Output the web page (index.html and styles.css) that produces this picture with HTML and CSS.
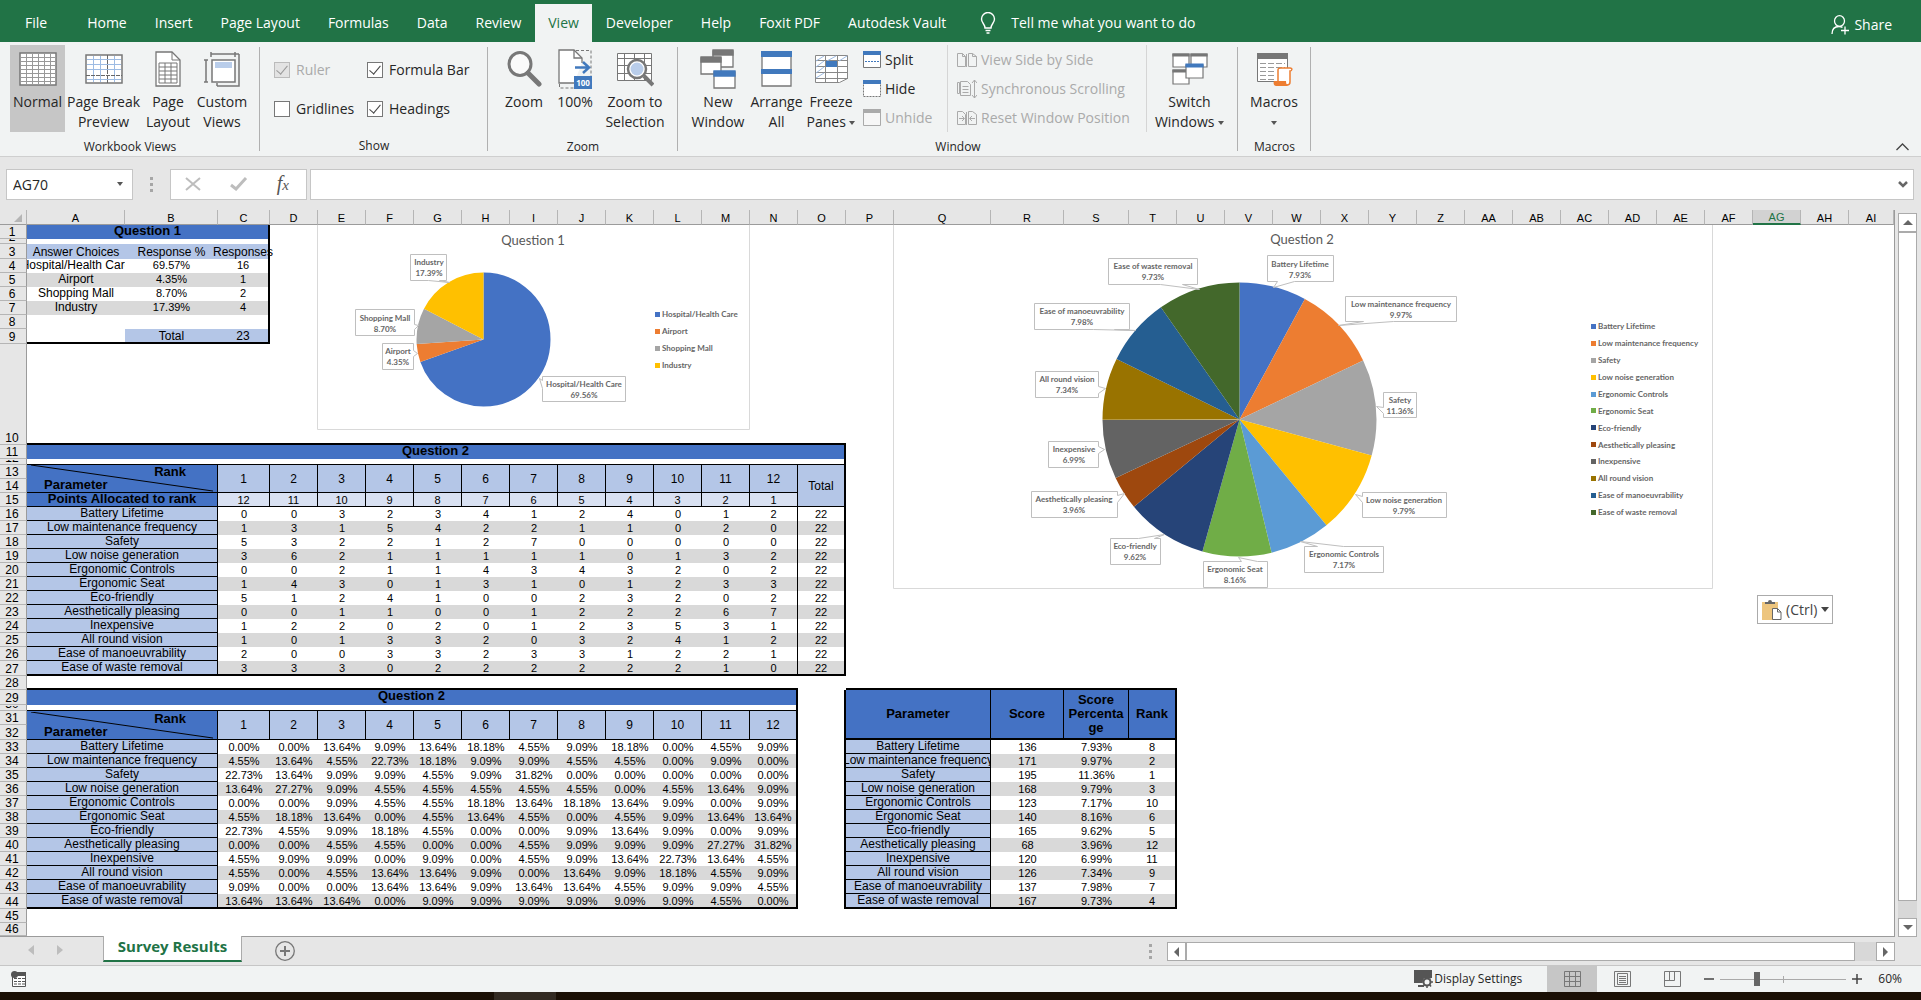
FILE: index.html
```html
<!DOCTYPE html>
<html lang="en">
<head>
<meta charset="utf-8">
<title>Survey Results</title>
<link rel="stylesheet" href="styles.css">
</head>
<body>
<nav class="tabs">
  <a class="tab file" href="#">File</a>
  <a class="tab" href="#">Home</a>
  <a class="tab" href="#">Insert</a>
  <a class="tab" href="#">Page Layout</a>
  <a class="tab" href="#">Formulas</a>
  <a class="tab" href="#">Data</a>
  <a class="tab" href="#">Review</a>
  <a class="tab active" href="#">View</a>
  <a class="tab" href="#">Developer</a>
  <a class="tab" href="#">Help</a>
  <a class="tab" href="#">Foxit PDF</a>
  <a class="tab" href="#">Autodesk Vault</a>
  <button class="tell"><svg width="16" height="22" viewBox="0 0 16 22" fill="none" stroke="#fff" stroke-width="1.4"><path d="M5 16C5 12 1.5 11 1.5 7a6.500 6.500 0 0 1 13 0c0 4-3.500 5-3.500 9zM5.500 18.500h5M6.500 21h3"/></svg><span>Tell me what you want to do</span></button>
  <button class="share"><svg width="19" height="20" viewBox="0 0 19 20" fill="none" stroke="#fff" stroke-width="1.300"><ellipse cx="8.500" cy="6" rx="5" ry="5.300"/><path d="M1 19c0-5 3-7.500 7-7.500 1.500 0 2.500.3 3.500.8M14 11.500v8M10 15.500h8"/></svg><span>Share</span></button>
</nav>

<section class="ribbon">
  <div class="group">
    <div class="body views">
      <button class="big one on w55"><span class="ico"><svg width="38" height="34" viewBox="0 0 38 34"><path fill="#fff" stroke="#777" stroke-width="1.500" d="M1 1h36v32H1z"/><path stroke="#999" d="M7.500 1v32M13.500 1v32M19.500 1v32M25.500 1v32M31.500 1v32M1 5.500h36M1 9.500h36M1 13.500h36M1 17.500h36M1 21.500h36M1 25.500h36M1 29.500h36"/></svg></span>Normal</button>
      <button class="big w77"><span class="ico"><svg width="38" height="30" viewBox="0 0 38 30"><path fill="#fff" stroke="#777" stroke-width="1.500" d="M1 1h36v28H1z"/><path stroke="#9dbbe3" d="M8.500 2v26M15.500 2v26M29.500 2v26M2 5.500h34M2 10.500h34M2 15.500h34M2 25.500h34"/><path stroke="#666" stroke-dasharray="4 1" d="M22.500 1v28M1 21.500h36"/></svg></span>Page Break<br>Preview</button>
      <button class="big w52"><span class="ico"><svg width="26" height="36" viewBox="0 0 26 36" fill="#fff" stroke="#777" stroke-width="1.300"><path d="M1 1h16l8 8v26H1z"/><path d="M17 1v8h8M4 12h18v20H4zM10 12v20M16 12v20M4 16h18M4 20h18M4 24h18M4 28h18" fill="none" stroke-width="1"/></svg></span>Page<br>Layout</button>
      <button class="big w56"><span class="ico"><svg width="38" height="36" viewBox="0 0 38 36" fill="none" stroke="#777" stroke-width="1.500"><path fill="#fff" d="M9 9h23v22H9z"/><path fill="#b9cdea" stroke="none" d="M12 11h17v6H12z"/><path d="M8 3h24M8 1v5M32 1v5M3 9v22M1 9h4M1 31h4M36 3v32H14"/><path d="M32 3h4M14 32v3"/></svg></span>Custom<br>Views</button>
    </div>
    <div class="label">Workbook Views</div>
  </div>
  <div class="group show">
    <div class="body checks">
      <label class="off"><input type="checkbox" checked disabled>Ruler</label>
      <label><input type="checkbox" checked>Formula Bar</label>
      <label><input type="checkbox">Gridlines</label>
      <label><input type="checkbox" checked>Headings</label>
    </div>
    <div class="label">Show</div>
  </div>
  <div class="group">
    <div class="body zoom">
      <button class="big one w44"><span class="ico"><svg width="35" height="36" viewBox="0 0 35 36" fill="none" stroke="#777"><ellipse cx="13" cy="13" rx="11" ry="11.500" fill="#fafafa" stroke-width="3"/><path stroke-width="5" stroke-linecap="round" d="M21 22l11 11"/></svg></span>Zoom</button>
      <button class="big one w58"><span class="ico"><svg width="34" height="40" viewBox="0 0 34 40"><path fill="#fff" stroke="#777" stroke-width="1.300" d="M24 14V9l-8-8H1v33h15"/><path fill="none" stroke="#777" stroke-width="1.300" d="M16 1v8h8"/><path fill="none" stroke="#777" stroke-dasharray="3 2" d="M18 1.500h15V27M1.500 35v4H16"/><path stroke="#4179bd" stroke-width="2.500" fill="none" d="M17 18.500h13M25 13l6 5.500-6 5.500"/><path fill="#4179bd" d="M16 27h18v13H16z"/><text x="25" y="37" class="tiny">100</text></svg></span>100%</button>
      <button class="big w62"><span class="ico"><svg width="38" height="36" viewBox="0 0 38 36" fill="none" stroke="#777"><path fill="#fff" d="M1.500 2.500h34v27h-34z"/><path d="M8.500 2v28M28.500 2v28M18.500 2v28M1 7.500h35M1 14.500h35M1 22.500h35"/><circle cx="21" cy="18" r="9" fill="#fff" stroke-width="2.500"/><circle cx="21" cy="18" r="6.500" fill="#b9cdea" stroke="none"/><path stroke-width="4" d="M28 25l9 9"/></svg></span>Zoom to<br>Selection</button>
    </div>
    <div class="label">Zoom</div>
  </div>
  <div class="group">
    <div class="body window">
      <button class="big w60"><span class="ico"><svg width="36" height="40" viewBox="0 0 36 40" fill="#fff" stroke="#777" stroke-width="1.300"><path d="M13 2h20v16H13z"/><path fill="#777" d="M13 1h20v5H13z"/><path d="M1 9h20v16H1z"/><path fill="#777" d="M1 8h20v5H1z"/><path d="M14 23h21v16H14z"/><path fill="#4179bd" stroke="#4179bd" d="M14 22h21v5H14z"/></svg></span>New<br>Window</button>
      <button class="big w57"><span class="ico"><svg width="31" height="36" viewBox="0 0 31 36"><path fill="#fff" stroke="#777" stroke-width="1.300" d="M1 1h29v34H1z"/><path fill="#4179bd" d="M0 0h31v6H0zM0 18h31v5H0z"/></svg></span>Arrange<br>All</button>
      <button class="big w52"><span class="ico"><svg width="35" height="30" viewBox="0 0 35 30" fill="none" stroke="#888"><path fill="#fff" d="M1.500 1.500h32v23l-8 4h-24z"/><path d="M11.500 1v28M23.500 1v27M1 6.500h33M1 12.500h33M1 18.500h33M1 24.500h33"/><path stroke="#9dbbe3" d="M2 7l8-5M13 7l9-5M25 7l8-5M2 13l8-6M2 19l8-6M2 24l8-5"/><path fill="#4179bd" stroke="none" d="M12 7h11v6H12z"/></svg></span>Freeze<br>Panes <i class="caret"></i></button>
      <div class="stack s1">
        <button class="small"><svg width="18" height="17" viewBox="0 0 18 17"><path fill="#fff" stroke="#777" d="M.5.5h17v16H.5z"/><path fill="#4179bd" d="M0 0h18v4H0z"/><path stroke="#4179bd" stroke-dasharray="2 1" d="M2 10.500h14"/></svg>Split</button>
        <button class="small"><svg width="18" height="17" viewBox="0 0 18 17"><path fill="#fff" stroke="#777" stroke-dasharray="2 1" d="M.5.5h17v16H.5z"/><path fill="#4179bd" d="M0 0h18v4H0z"/></svg>Hide</button>
        <button class="small off" disabled><svg width="18" height="17" viewBox="0 0 18 17"><path fill="#f6f6f6" stroke="#aaa" d="M.5.5h17v16H.5z"/><path fill="#aaa" d="M0 0h18v4H0z"/></svg>Unhide</button>
      </div>
      <div class="stack s2">
        <button class="small off" disabled><svg width="20" height="16" viewBox="0 0 20 16" fill="none" stroke="#aaa"><path d="M.5 1.500h5l3 3v10h-8zM5.500 1.500v3h3M11.500 1.500h4l4 3v10h-8zM15.500 1.500v3h4M9.500 2v13"/></svg>View Side by Side</button>
        <button class="small off" disabled><svg width="20" height="20" viewBox="0 0 20 20" fill="none" stroke="#aaa"><path d="M.5 3.500h2v11h-2zM3.500 2.500h7l3 3v11h-10zM5.500 7.500h6M5.500 10.500h6M5.500 13.500h6M17.500 1v18M15 4l2.500-3L20 4M15 16l2.500 3 2.500-3"/></svg>Synchronous Scrolling</button>
        <button class="small off" disabled><svg width="20" height="16" viewBox="0 0 20 16" fill="none" stroke="#aaa"><path d="M.5 1.500h5l3 3v10h-8zM11.500 1.500h4l4 3v10h-8zM9.500 2v13M2 8.500h5M5 6l2.500 2.500L5 11M18 8.500h-5M15 6l-2.500 2.500L15 11"/></svg>Reset Window Position</button>
      </div>
      <button class="big w85"><span class="ico"><svg width="36" height="32" viewBox="0 0 36 32" fill="#fff" stroke="#777" stroke-width="1.200"><path d="M1 1h16v13H1zM19 1h16v13H19zM1 17h16v14H1z"/><path fill="#777" d="M1 1h16v2H1zM19 1h16v2H19zM1 17h14v2H1z"/><path d="M14 12h17v13H14z"/><path fill="#4179bd" stroke="#4179bd" d="M14 11h17v3H14z"/></svg></span>Switch<br>Windows <i class="caret"></i></button>
    </div>
    <div class="label">Window</div>
  </div>
  <div class="group">
    <div class="body macros">
      <button class="big w60"><span class="ico"><svg width="37" height="34" viewBox="0 0 37 34"><path fill="#fff" stroke="#777" d="M1.500 1.500h30v28h-30z"/><path fill="#777" d="M1 1h31v6H1z"/><path stroke="#999" stroke-dasharray="6 2" d="M4 11.500h25M4 15.500h25M4 19.500h16M4 23.500h16M4 27.500h14"/><path fill="#fff" stroke="#ed7d31" stroke-width="1.500" d="M22 29V18c0-2 1-2 3-2h9c3 0 2 3 0 3v11c0 2-1 3-3 3H20"/><path fill="#ed7d31" d="M18 29h12c0 3 1 4 2 5H20c-2 0-3-3-2-5z"/></svg></span>Macros<br><i class="caret"></i></button>
    </div>
    <div class="label">Macros</div>
  </div>
  <button class="collapse" aria-label="Collapse the ribbon"><svg width="13" height="8" viewBox="0 0 13 8" fill="none" stroke="#444" stroke-width="1.300"><path d="M.5 7l6-6 6 6"/></svg></button>
</section>

<section class="formula">
  <div class="namebox"><input aria-label="Name box" value="AG70"><i class="caret"></i></div>
  <svg class="dots" width="4" height="16" fill="#a6a6a6"><path d="M0 1h3v3H0zM0 7h3v3H0zM0 13h3v3H0z"/></svg>
  <div class="fxbox">
    <button aria-label="Cancel"><svg width="16" height="14" viewBox="0 0 16 14" fill="none" stroke="#bdbdbd" stroke-width="2"><path d="M1 1l14 12M15 1L1 13"/></svg></button>
    <button aria-label="Enter"><svg width="18" height="14" viewBox="0 0 18 14" fill="none" stroke="#bdbdbd" stroke-width="3"><path d="M1 8l5 4L16 1"/></svg></button>
    <button class="fx" aria-label="Insert function"><i>f</i><i class="x">x</i></button>
  </div>
  <div class="entry"><input aria-label="Formula"><svg width="10" height="7" viewBox="0 0 10 7" fill="none" stroke="#666" stroke-width="2.500"><path d="M1 1l4 4 4-4"/></svg></div>
</section>

<main class="work">
<div class="pane">
<table class="sheet">
<colgroup><col class="c27"><col class="c98"><col class="c93"><col class="c52"><col span="13" class="c48"><col class="c97"><col class="c73"><col class="c65"><col span="15" class="c48"><col></colgroup>
<thead><tr><th class="corner"><svg width="8" height="8"><path fill="#b5b5b5" d="M8 0v8H0z"/></svg><th>A<th>B<th>C<th>D<th>E<th>F<th>G<th>H<th>I<th>J<th>K<th>L<th>M<th>N<th>O<th>P<th>Q<th>R<th>S<th>T<th>U<th>V<th>W<th>X<th>Y<th>Z<th>AA<th>AB<th>AC<th>AD<th>AE<th>AF<th class="sel">AG<th>AH<th>AI</tr></thead>
<tbody>
<tr><th>1<th colspan="3" class="title r2">Question 1<td colspan="32">
<tr class="h5"><th><span class="cut">2</span><td colspan="3" class="r2"><td colspan="32">
<tr class="h15 sub"><th>3<th>Answer Choices<th>Response %<th class="r2"><span class="spill">Responses</span><td colspan="32">
<tr class="ans"><th>4<td><span class="clip">Hospital/Health Care</span><td>69.57%<td class="r2">16<td colspan="32">
<tr class="ans z"><th>5<td>Airport<td>4.35%<td class="r2">1<td colspan="32">
<tr class="ans"><th>6<td>Shopping Mall<td>8.70%<td class="r2">2<td colspan="32">
<tr class="ans z"><th>7<td>Industry<td>17.39%<td class="r2">4<td colspan="32">
<tr><th>8<td colspan="3" class="r2"><td colspan="32">
<tr class="h15"><th>9<td class="b2"><td class="light b2">Total<td class="light b2 r2">23<td colspan="32">
<tr class="h101"><th>10<td colspan="15" class="b2"><td colspan="20">
<tr><th>11<th colspan="15" class="title r2">Question 2<td colspan="20">
<tr class="h6"><th><span class="cut">12</span><td colspan="15" class="b1 r2"><td colspan="20">
<tr class="rank"><th>13<th colspan="2" rowspan="2" class="diag"><div class="split"><span>Rank</span><span>Parameter</span><svg viewBox="0 0 191 28" preserveAspectRatio="none"><path d="M4 0L187 27" stroke="#000"/></svg></div><th rowspan="2">1<th rowspan="2">2<th rowspan="2">3<th rowspan="2">4<th rowspan="2">5<th rowspan="2">6<th rowspan="2">7<th rowspan="2">8<th rowspan="2">9<th rowspan="2">10<th rowspan="2">11<th rowspan="2">12<th rowspan="3" class="r2">Total<td colspan="20">
<tr><th>14<td colspan="20">
<tr class="points"><th>15<th colspan="2">Points Allocated to rank<td>12<td>11<td>10<td>9<td>8<td>7<td>6<td>5<td>4<td>3<td>2<td>1<td colspan="20">
<tr class="pts"><th>16<th colspan="2">Battery Lifetime<td>0<td>0<td>3<td>2<td>3<td>4<td>1<td>2<td>4<td>0<td>1<td>2<td>22<td colspan="20">
<tr class="pts z"><th>17<th colspan="2">Low maintenance frequency<td>1<td>3<td>1<td>5<td>4<td>2<td>2<td>1<td>1<td>0<td>2<td>0<td>22<td colspan="20">
<tr class="pts"><th>18<th colspan="2">Safety<td>5<td>3<td>2<td>2<td>1<td>2<td>7<td>0<td>0<td>0<td>0<td>0<td>22<td colspan="20">
<tr class="pts z"><th>19<th colspan="2">Low noise generation<td>3<td>6<td>2<td>1<td>1<td>1<td>1<td>1<td>0<td>1<td>3<td>2<td>22<td colspan="20">
<tr class="pts"><th>20<th colspan="2">Ergonomic Controls<td>0<td>0<td>2<td>1<td>1<td>4<td>3<td>4<td>3<td>2<td>0<td>2<td>22<td colspan="20">
<tr class="pts z"><th>21<th colspan="2">Ergonomic Seat<td>1<td>4<td>3<td>0<td>1<td>3<td>1<td>0<td>1<td>2<td>3<td>3<td>22<td colspan="20">
<tr class="pts"><th>22<th colspan="2">Eco-friendly<td>5<td>1<td>2<td>4<td>1<td>0<td>0<td>2<td>3<td>2<td>0<td>2<td>22<td colspan="20">
<tr class="pts z"><th>23<th colspan="2">Aesthetically pleasing<td>0<td>0<td>1<td>1<td>0<td>0<td>1<td>2<td>2<td>2<td>6<td>7<td>22<td colspan="20">
<tr class="pts"><th>24<th colspan="2">Inexpensive<td>1<td>2<td>2<td>0<td>2<td>0<td>1<td>2<td>3<td>5<td>3<td>1<td>22<td colspan="20">
<tr class="pts z"><th>25<th colspan="2">All round vision<td>1<td>0<td>1<td>3<td>3<td>2<td>0<td>3<td>2<td>4<td>1<td>2<td>22<td colspan="20">
<tr class="pts"><th>26<th colspan="2">Ease of manoeuvrability<td>2<td>0<td>0<td>3<td>3<td>2<td>3<td>3<td>1<td>2<td>2<td>1<td>22<td colspan="20">
<tr class="pts z last"><th>27<th colspan="2">Ease of waste removal<td>3<td>3<td>3<td>0<td>2<td>2<td>2<td>2<td>2<td>2<td>1<td>0<td>22<td colspan="20">
<tr><th>28<td colspan="14" class="b2"><td><td colspan="5" class="b2"><td colspan="15">
<tr class="h15 score"><th>29<th colspan="14" class="title r2">Question 2<td rowspan="4" class="r2"><th colspan="2" rowspan="4">Parameter<th rowspan="4">Score<th rowspan="4">Score<br>Percenta<br>ge<th rowspan="4" class="r2">Rank<td colspan="15">
<tr class="h6"><th><span class="cut">30</span><td colspan="14" class="b1 r2"><td colspan="15">
<tr class="rank"><th>31<th colspan="2" rowspan="2" class="diag"><div class="split"><span>Rank</span><span>Parameter</span><svg viewBox="0 0 191 28" preserveAspectRatio="none"><path d="M4 0L187 27" stroke="#000"/></svg></div><th rowspan="2">1<th rowspan="2">2<th rowspan="2">3<th rowspan="2">4<th rowspan="2">5<th rowspan="2">6<th rowspan="2">7<th rowspan="2">8<th rowspan="2">9<th rowspan="2">10<th rowspan="2">11<th rowspan="2" class="r2">12<td colspan="15">
<tr class="h15"><th>32<td colspan="15">
<tr class="pct"><th>33<th colspan="2">Battery Lifetime<td>0.00%<td>0.00%<td>13.64%<td>9.09%<td>13.64%<td>18.18%<td>4.55%<td>9.09%<td>18.18%<td>0.00%<td>4.55%<td>9.09%<td><th colspan="2">Battery Lifetime<td>136<td>7.93%<td>8<td colspan="15">
<tr class="pct z"><th>34<th colspan="2">Low maintenance frequency<td>4.55%<td>13.64%<td>4.55%<td>22.73%<td>18.18%<td>9.09%<td>9.09%<td>4.55%<td>4.55%<td>0.00%<td>9.09%<td>0.00%<td><th colspan="2"><span class="clip">Low maintenance frequency</span><td>171<td>9.97%<td>2<td colspan="15">
<tr class="pct"><th>35<th colspan="2">Safety<td>22.73%<td>13.64%<td>9.09%<td>9.09%<td>4.55%<td>9.09%<td>31.82%<td>0.00%<td>0.00%<td>0.00%<td>0.00%<td>0.00%<td><th colspan="2">Safety<td>195<td>11.36%<td>1<td colspan="15">
<tr class="pct z"><th>36<th colspan="2">Low noise generation<td>13.64%<td>27.27%<td>9.09%<td>4.55%<td>4.55%<td>4.55%<td>4.55%<td>4.55%<td>0.00%<td>4.55%<td>13.64%<td>9.09%<td><th colspan="2">Low noise generation<td>168<td>9.79%<td>3<td colspan="15">
<tr class="pct"><th>37<th colspan="2">Ergonomic Controls<td>0.00%<td>0.00%<td>9.09%<td>4.55%<td>4.55%<td>18.18%<td>13.64%<td>18.18%<td>13.64%<td>9.09%<td>0.00%<td>9.09%<td><th colspan="2">Ergonomic Controls<td>123<td>7.17%<td>10<td colspan="15">
<tr class="pct z"><th>38<th colspan="2">Ergonomic Seat<td>4.55%<td>18.18%<td>13.64%<td>0.00%<td>4.55%<td>13.64%<td>4.55%<td>0.00%<td>4.55%<td>9.09%<td>13.64%<td>13.64%<td><th colspan="2">Ergonomic Seat<td>140<td>8.16%<td>6<td colspan="15">
<tr class="pct"><th>39<th colspan="2">Eco-friendly<td>22.73%<td>4.55%<td>9.09%<td>18.18%<td>4.55%<td>0.00%<td>0.00%<td>9.09%<td>13.64%<td>9.09%<td>0.00%<td>9.09%<td><th colspan="2">Eco-friendly<td>165<td>9.62%<td>5<td colspan="15">
<tr class="pct z"><th>40<th colspan="2">Aesthetically pleasing<td>0.00%<td>0.00%<td>4.55%<td>4.55%<td>0.00%<td>0.00%<td>4.55%<td>9.09%<td>9.09%<td>9.09%<td>27.27%<td>31.82%<td><th colspan="2">Aesthetically pleasing<td>68<td>3.96%<td>12<td colspan="15">
<tr class="pct"><th>41<th colspan="2">Inexpensive<td>4.55%<td>9.09%<td>9.09%<td>0.00%<td>9.09%<td>0.00%<td>4.55%<td>9.09%<td>13.64%<td>22.73%<td>13.64%<td>4.55%<td><th colspan="2">Inexpensive<td>120<td>6.99%<td>11<td colspan="15">
<tr class="pct z"><th>42<th colspan="2">All round vision<td>4.55%<td>0.00%<td>4.55%<td>13.64%<td>13.64%<td>9.09%<td>0.00%<td>13.64%<td>9.09%<td>18.18%<td>4.55%<td>9.09%<td><th colspan="2">All round vision<td>126<td>7.34%<td>9<td colspan="15">
<tr class="pct"><th>43<th colspan="2">Ease of manoeuvrability<td>9.09%<td>0.00%<td>0.00%<td>13.64%<td>13.64%<td>9.09%<td>13.64%<td>13.64%<td>4.55%<td>9.09%<td>9.09%<td>4.55%<td><th colspan="2">Ease of manoeuvrability<td>137<td>7.98%<td>7<td colspan="15">
<tr class="pct z last"><th>44<th colspan="2">Ease of waste removal<td>13.64%<td>13.64%<td>13.64%<td>0.00%<td>9.09%<td>9.09%<td>9.09%<td>9.09%<td>9.09%<td>9.09%<td>4.55%<td>0.00%<td><th colspan="2">Ease of waste removal<td>167<td>9.73%<td>4<td colspan="15">
<tr><th>45<td colspan="35">
<tr class="h12"><th>46<td colspan="35">
</tbody>
</table>

<svg class="chart chart1" width="433" height="205" viewBox="0 0 433 205" role="img" aria-label="Question 1 pie chart">
  <path class="frame" d="M.5 0v204.500h432V0"/>
  <text class="ctitle" x="216" y="20">Question 1</text>
  <g class="pie" transform="translate(166.500 114.500) rotate(-90)" stroke-width="67">
    <circle r="33.500" pathLength="100" stroke="#4472c4" stroke-dasharray="69.560 100"/>
    <circle r="33.500" pathLength="100" stroke="#ed7d31" stroke-dasharray="4.350 100" stroke-dashoffset="-69.560"/>
    <circle r="33.500" pathLength="100" stroke="#a5a5a5" stroke-dasharray="8.700 100" stroke-dashoffset="-73.910"/>
    <circle r="33.500" pathLength="100" stroke="#ffc000" stroke-dasharray="17.390 100" stroke-dashoffset="-82.610"/>
  </g>
  <g class="call">
    <path d="M93.500 29.500h36v26h-7l10 2-21-2h-18z"/><text x="112" y="40">Industry</text><text x="112" y="51">17.39%</text>
    <path d="M38.500 84.500h59v15l4 1-4 4v6h-59z"/><text x="68" y="96">Shopping Mall</text><text x="68" y="107">8.70%</text>
    <path d="M65.500 118.500h31v7l4 3-4 3v13h-31z"/><text x="81" y="129">Airport</text><text x="81" y="140">4.35%</text>
    <path d="M225.500 151.500h83v25h-83v-13l-3-10 3 2z"/><text x="267" y="162">Hospital/Health Care</text><text x="267" y="173">69.56%</text>
  </g>
  <g class="legend">
    <path fill="#4472c4" d="M338 87h5v5h-5z"/><text x="345" y="92">Hospital/Health Care</text>
    <path fill="#ed7d31" d="M338 104h5v5h-5z"/><text x="345" y="109">Airport</text>
    <path fill="#a5a5a5" d="M338 121h5v5h-5z"/><text x="345" y="126">Shopping Mall</text>
    <path fill="#ffc000" d="M338 138h5v5h-5z"/><text x="345" y="143">Industry</text>
  </g>
</svg>

<svg class="chart chart2" width="820" height="364" viewBox="0 0 820 364" role="img" aria-label="Question 2 pie chart">
  <path class="frame" d="M.5 0v363.500h819V0"/>
  <text class="ctitle" x="409" y="19">Question 2</text>
  <g class="pie" transform="translate(346.500 194.500) rotate(-90)" stroke-width="137">
    <circle r="68.500" pathLength="100" stroke="#4472c4" stroke-dasharray="7.930 100"/>
    <circle r="68.500" pathLength="100" stroke="#ed7d31" stroke-dasharray="9.970 100" stroke-dashoffset="-7.930"/>
    <circle r="68.500" pathLength="100" stroke="#a5a5a5" stroke-dasharray="11.360 100" stroke-dashoffset="-17.900"/>
    <circle r="68.500" pathLength="100" stroke="#ffc000" stroke-dasharray="9.790 100" stroke-dashoffset="-29.260"/>
    <circle r="68.500" pathLength="100" stroke="#5b9bd5" stroke-dasharray="7.170 100" stroke-dashoffset="-39.050"/>
    <circle r="68.500" pathLength="100" stroke="#70ad47" stroke-dasharray="8.160 100" stroke-dashoffset="-46.220"/>
    <circle r="68.500" pathLength="100" stroke="#264478" stroke-dasharray="9.620 100" stroke-dashoffset="-54.380"/>
    <circle r="68.500" pathLength="100" stroke="#9e480e" stroke-dasharray="3.960 100" stroke-dashoffset="-64"/>
    <circle r="68.500" pathLength="100" stroke="#636363" stroke-dasharray="6.990 100" stroke-dashoffset="-67.960"/>
    <circle r="68.500" pathLength="100" stroke="#997300" stroke-dasharray="7.340 100" stroke-dashoffset="-74.950"/>
    <circle r="68.500" pathLength="100" stroke="#255e91" stroke-dasharray="7.980 100" stroke-dashoffset="-82.290"/>
    <circle r="68.500" pathLength="100" stroke="#43682b" stroke-dasharray="9.730 100" stroke-dashoffset="-90.270"/>
  </g>
  <g class="call">
    <path d="M215.500 33.500h89v26h-15l17 5-39-5h-52z"/><text x="260" y="44">Ease of waste removal</text><text x="260" y="55">9.73%</text>
    <path d="M374.500 30.500h66v26h-39l-21 6 4-6h-10z"/><text x="407" y="42">Battery Lifetime</text><text x="407" y="53">7.93%</text>
    <path d="M452.500 71.500h111v25h-63l-55 4 25-4h-18z"/><text x="508" y="82">Low maintenance frequency</text><text x="508" y="93">9.97%</text>
    <path d="M490.500 167.500h33v25h-33v-4l-7-7 7 1z"/><text x="507" y="178">Safety</text><text x="507" y="189">11.36%</text>
    <path d="M469.500 267.500h84v25h-84v-15l-7-8 7 2z"/><text x="511" y="278">Low noise generation</text><text x="511" y="289">9.79%</text>
    <path d="M411.500 321.500h13l-17-5 43 5h40v26h-79z"/><text x="451" y="332">Ergonomic Controls</text><text x="451" y="343">7.17%</text>
    <path d="M310.500 336.500h38l-3-4 19 4h10v26h-64z"/><text x="342" y="347">Ergonomic Seat</text><text x="342" y="358">8.16%</text>
    <path d="M217.500 313.500h28l26-4-10 4h6v26h-50z"/><text x="242" y="324">Eco-friendly</text><text x="242" y="335">9.62%</text>
    <path d="M138.500 266.500h86v4l7-2-7 9v15h-86z"/><text x="181" y="277">Aesthetically pleasing</text><text x="181" y="288">3.96%</text>
    <path d="M155.500 216.500h50v5l6 3-6 4v14h-50z"/><text x="181" y="227">Inexpensive</text><text x="181" y="238">6.99%</text>
    <path d="M142.500 146.500h63v15l7 2-7 5v4h-63z"/><text x="174" y="157">All round vision</text><text x="174" y="168">7.34%</text>
    <path d="M141.500 78.500h95v26h-15l21 1-42-1h-59z"/><text x="189" y="89">Ease of manoeuvrability</text><text x="189" y="100">7.98%</text>
  </g>
  <g class="legend">
    <path fill="#4472c4" d="M698 99h5v5h-5z"/><text x="705" y="104">Battery Lifetime</text>
    <path fill="#ed7d31" d="M698 116h5v5h-5z"/><text x="705" y="121">Low maintenance frequency</text>
    <path fill="#a5a5a5" d="M698 133h5v5h-5z"/><text x="705" y="138">Safety</text>
    <path fill="#ffc000" d="M698 150h5v5h-5z"/><text x="705" y="155">Low noise generation</text>
    <path fill="#5b9bd5" d="M698 167h5v5h-5z"/><text x="705" y="172">Ergonomic Controls</text>
    <path fill="#70ad47" d="M698 183h5v5h-5z"/><text x="705" y="189">Ergonomic Seat</text>
    <path fill="#264478" d="M698 200h5v5h-5z"/><text x="705" y="206">Eco-friendly</text>
    <path fill="#9e480e" d="M698 217h5v5h-5z"/><text x="705" y="223">Aesthetically pleasing</text>
    <path fill="#636363" d="M698 234h5v5h-5z"/><text x="705" y="239">Inexpensive</text>
    <path fill="#997300" d="M698 251h5v5h-5z"/><text x="705" y="256">All round vision</text>
    <path fill="#255e91" d="M698 268h5v5h-5z"/><text x="705" y="273">Ease of manoeuvrability</text>
    <path fill="#43682b" d="M698 285h5v5h-5z"/><text x="705" y="290">Ease of waste removal</text>
  </g>
</svg>

<button class="paste"><svg width="20" height="20" viewBox="0 0 20 20"><path fill="#edc57e" d="M0 2h16v18H0z"/><path fill="#666" d="M3 4V2h3a2 2 0 0 1 4 0h3v2z"/><path fill="#fff" stroke="#666" d="M10.500 8.500h5l3.500 3.500v7.500h-8.500z"/><path fill="none" stroke="#666" d="M15.500 8.500V12H19"/></svg>(Ctrl)<svg width="8" height="5"><path fill="#444" d="M0 0h8L4 5z"/></svg></button>
</div>

<div class="vscroll">
  <button aria-label="Scroll up"><svg width="10" height="5"><path fill="#666" d="M0 5l5-5 5 5z"/></svg></button>
  <div class="vthumb"></div>
  <div class="vtrack"></div>
  <button aria-label="Scroll down"><svg width="10" height="5"><path fill="#666" d="M0 0h10L5 5z"/></svg></button>
</div>
</main>

<section class="sheetbar">
  <div class="nav"><button aria-label="Previous sheet"><svg width="6" height="10"><path fill="#bdbdbd" d="M6 0v10L0 5z"/></svg></button><button aria-label="Next sheet"><svg width="6" height="10"><path fill="#bdbdbd" d="M0 0v10l6-5z"/></svg></button></div>
  <button class="stab">Survey Results</button>
  <button class="add" aria-label="New sheet"><svg width="20" height="20" viewBox="0 0 20 20" fill="none" stroke="#777"><circle cx="10" cy="10" r="9.300" stroke-width="1.300"/><path stroke-width="2" d="M10 5v10M5 10h10"/></svg></button>
  <svg class="dots push" width="4" height="16" fill="#a6a6a6"><path d="M0 1h3v3H0zM0 7h3v3H0zM0 13h3v3H0z"/></svg>
  <div class="hscroll">
    <button aria-label="Scroll left"><svg width="5" height="10"><path fill="#666" d="M5 0v10L0 5z"/></svg></button>
    <div class="hthumb"></div>
    <div class="htrack"></div>
    <button aria-label="Scroll right"><svg width="5" height="10"><path fill="#666" d="M0 0v10l5-5z"/></svg></button>
  </div>
</section>

<footer class="status">
  <svg class="rec" width="16" height="16" viewBox="0 0 16 16"><path fill="#fff" stroke="#555" d="M1.500 3.500h13v12h-13z"/><path fill="#555" d="M6 1h9v4H6z"/><path stroke="#555" stroke-dasharray="3 1" d="M3 7.500h11M3 10.500h11M3 13h11"/><circle cx="3.500" cy="3.500" r="3.500" fill="#555"/></svg>
  <button class="disp"><svg width="20" height="18" viewBox="0 0 20 18"><path fill="#555" d="M1 0h18v8h-8l-2 5H1zM5 15h6v2H5z"/><circle cx="14" cy="12" r="3.500" fill="none" stroke="#555" stroke-width="2"/><path stroke="#555" stroke-width="1.500" d="M14 7v2M14 15v3M9 12h2M17 12h3M10.500 8.500l1 1M16.500 14.500l1.500 2M17.500 8.500l-1 1M11.500 14.500l-1.500 2"/></svg>Display Settings</button>
  <button class="vw cur" aria-label="Normal view"><svg width="17" height="16" fill="none" stroke="#777"><path d="M.5.5h16v15H.5zM5.500 0v16M11.500 0v16M0 5.500h17M0 10.500h17"/></svg></button>
  <button class="vw" aria-label="Page layout view"><svg width="17" height="16" fill="none" stroke="#777"><path d="M.5.5h16v15H.5zM3.500 2.500h10v11h-10zM5 5.500h7M5 7.500h7M5 9.500h7M5 11.500h7"/></svg></button>
  <button class="vw" aria-label="Page break view"><svg width="17" height="16" fill="none" stroke="#777"><path d="M.5.5h16v15H.5zM.5 9.500h10V.5M5.500 0v9"/></svg></button>
  <div class="zoombar"><button aria-label="Zoom out"><svg width="10" height="10"><path stroke="#444" stroke-width="1.500" d="M0 5h10"/></svg></button><input type="range" min="0" max="100" value="28" aria-label="Zoom"><button aria-label="Zoom in"><svg width="10" height="10"><path stroke="#444" stroke-width="1.500" d="M0 5h10M5 0v10"/></svg></button></div>
  <span class="pctg">60%</span>
</footer>
<div class="taskbar"><span></span></div>
</body>
</html>
```
FILE: styles.css
```css
* { box-sizing: border-box; }
body {
  margin: 0;
  min-height: 100vh;
  display: flex;
  flex-direction: column;
  overflow: hidden;
  background: #e6e6e6;
  color: #262626;
  font: 14px/20px "Open Sans", "Noto Sans", sans-serif;
}
button, input { font: inherit; color: inherit; }
button { margin: 0; padding: 0; border: 0; background: none; }
svg { display: block; flex: none; }

/* tab strip */
.tabs { display: flex; align-items: stretch; height: 42px; padding-top: 4px; background: #217346; color: #fff; }
.tab { padding: 9px 14px 0; color: #fff; text-decoration: none; white-space: nowrap; }
.tab.file { padding: 9px 26px 0 25px; }
.tab.active { padding: 9px 13px 0; background: #f1f3f3; color: #217346; }
.tell { display: flex; align-items: center; gap: 15px; margin-left: 20px; white-space: nowrap; }
.share { display: flex; align-items: center; gap: 4px; margin: 0 29px 0 auto; padding-top: 4px; }

/* ribbon */
.ribbon { display: flex; height: 115px; padding: 3px 0 0; background: #f1f3f3; border-bottom: 1px solid #cfcfcf; }
.group { position: relative; display: flex; flex-direction: column; }
.group::after { content: ""; position: absolute; right: 0; top: 2px; bottom: 5px; width: 1px; background: #b0b0b0; }
.body { display: flex; height: 87px; }
.views { padding: 0 10px; }
.zoom { padding: 0 12px 0 14px; }
.window { padding: 0 6px 0 10px; }
.macros { padding: 0 7px 0 6px; }
.label { padding-top: 5px; text-align: center; font-size: 12px; }
.big { height: 87px; text-align: center; white-space: nowrap; }
.one { padding-bottom: 20px; }
.ico { display: flex; align-items: center; justify-content: center; height: 47px; }
.on { background: #c6c6c6; }
.w44 { width: 44px; } .w52 { width: 52px; } .w55 { width: 55px; } .w56 { width: 56px; }
.w57 { width: 57px; } .w58 { width: 58px; } .w60 { width: 60px; } .w62 { width: 62px; }
.w77 { width: 77px; } .w85 { width: 85px; }
.tiny { font: bold 8px "Open Sans", sans-serif; fill: #fff; text-anchor: middle; }
.caret { display: inline-block; border: 3px solid transparent; border-top: 4px solid #555; border-bottom: 0; vertical-align: 2px; }
.show { width: 228px; }
.checks { display: grid; grid-template-columns: 93px 1fr; grid-auto-rows: 39px; padding: 5px 0 0 14px; }
.checks label { display: flex; align-items: center; gap: 6px; white-space: nowrap; }
.checks input { appearance: none; flex: none; width: 16px; height: 16px; margin: 0; background: #fff; border: 1px solid #777; }
.checks input:checked::after { content: ""; display: block; width: 5px; height: 10px; margin: 0 0 0 4px; border: solid #444; border-width: 0 1px 1px 0; transform: rotate(40deg); }
.checks .off input { background: #e3e3e3; border-color: #bbb; }
.checks .off input::after { border-color: #999; }
.off, .off:disabled { color: #aaa; }
.stack { display: flex; flex-direction: column; }
.s1 { width: 90px; padding-left: 6px; }
.s2 { width: 200px; padding-left: 9px; border: solid #d5d5d5; border-width: 0 1px; }
.small { display: flex; align-items: center; gap: 4px; height: 29px; white-space: nowrap; }
.collapse { margin: auto 12px 5px auto; }

/* formula bar */
.formula { display: flex; align-items: center; height: 53px; padding: 1px 7px 0 6px; }
.namebox, .fxbox, .entry { display: flex; align-items: center; height: 31px; background: #fff; border: 1px solid #c6c6c6; }
.namebox { width: 127px; padding: 0 9px 0 6px; }
.namebox input, .entry input { flex: 1; min-width: 0; height: 28px; padding: 0; border: 0; outline: 0; background: none; }
.dots { margin: 0 16px 0 17px; }
.fxbox { width: 137px; justify-content: space-between; padding: 0 17px 0 14px; }
.fx { font: italic 20px/24px "Liberation Serif", serif; color: #555; }
.fx .x { font-size: 15px; }
.entry { flex: 1; margin-left: 3px; padding: 0 5px; }

/* worksheet */
.work { display: flex; }
.pane { position: relative; flex: 1; min-width: 0; overflow: hidden; background: #fff; border: solid #9b9b9b; border-width: 0 1px 1px 0; }
.sheet { width: 100%; table-layout: fixed; border-collapse: separate; border-spacing: 0; color: #000; font: 11px/12px "Liberation Sans", Arial, sans-serif; }
.c27 { width: 27px; } .c98 { width: 98px; } .c93 { width: 93px; } .c52 { width: 52px; } .c48 { width: 48px; }
.c97 { width: 97px; } .c73 { width: 73px; } .c65 { width: 65px; }
.sheet td, .sheet th { padding: 0; text-align: center; vertical-align: middle; white-space: nowrap; font-weight: normal; border: 0 solid #000; }
.sheet tr { height: 14px; }
.sheet .h5 { height: 5px; } .sheet .h6 { height: 6px; } .sheet .h12 { height: 12px; }
.sheet .h15, .sheet .last { height: 15px; } .sheet .h101 { height: 101px; }
.sheet thead tr { height: 15px; }
.sheet thead th { background: #e6e6e6; border-right: 1px solid #b5b5b5; border-bottom: 1px solid #9b9b9b; font-size: 11px; vertical-align: bottom; }
.sheet thead .sel { background: #d2d2d2; color: #217346; border-bottom: 2px solid #217346; }
.sheet .corner svg { margin: 0 0 2px 14px; }
.sheet .title, .sheet .points th + th { background: #4472c4; font-weight: bold; font-size: 13px; vertical-align: top; }
.sheet .score > td ~ th { background: #4472c4; font-weight: bold; font-size: 13px; line-height: 14px; border-right: 1px solid; border-bottom: 2px solid; }
.sheet .sub th + th, .sheet .light, .sheet .rank th + th, .sheet .pts th + th, .sheet .pct th + th, .sheet .pct td + th { background: #b4c6e7; font-size: 12px; }
.sheet .ans td:nth-child(2) { font-size: 12px; }
.sheet .pts th + th, .sheet .pct th + th, .sheet .pct td + th, .sheet .ans td { vertical-align: top; }
.sheet .rank th + th { border-right: 1px solid; border-bottom: 1px solid; }
.sheet .rank .diag { background: #4472c4; }
.sheet .points td { background: #d9e1f2; border-right: 1px solid; border-bottom: 1px solid; }
.sheet .points td:last-child { background: none; border: 0; }
.sheet .points th + th { border-right: 1px solid; border-bottom: 1px solid; }
.sheet .pts th + th, .sheet .pct th + th, .sheet .pct td + th { border-right: 1px solid; border-bottom: 1px solid; }
.sheet .z td { background: #d9d9d9; }
.sheet .z td:last-child, .sheet .pct.z td:nth-child(15) { background: none; }
.sheet .pts td:nth-child(14) { border-right: 1px solid; }
.sheet .pts td:nth-child(15), .sheet .pct td:nth-child(14), .sheet .pct td:nth-child(15), .sheet .pct td:nth-child(19) { border-right: 2px solid; }
.sheet .last th + th, .sheet .last td + th, .sheet .last td { border-bottom: 2px solid; }
.sheet .last td:last-child, .sheet .pct.last td:nth-child(15) { border-bottom: 0; }
.sheet .sub .r2, .sheet .r2, .sheet .rank .r2, .sheet .score > .r2 { border-right: 2px solid #000; }
.sheet .b1 { border-bottom: 1px solid #000; }
.sheet .b2 { border-bottom: 2px solid #000; }
.sheet tbody th:first-child { padding-right: 2px; background: #e6e6e6; border-right: 1px solid #9b9b9b; border-bottom: 1px solid #b5b5b5; font-size: 12px; vertical-align: bottom; }
.clip, .spill { display: flex; justify-content: center; overflow: hidden; }
.spill { overflow: visible; }
.cut { display: flex; align-items: flex-end; justify-content: center; height: 4px; overflow: hidden; }
.split { position: relative; display: flex; flex-direction: column; height: 27px; font-size: 13px; line-height: 13px; font-weight: bold; }
.split span:first-child { align-self: flex-end; margin-right: 31px; }
.split span:nth-child(2) { align-self: flex-start; margin-left: 17px; }
.split svg { position: absolute; left: 0; top: 0; width: 100%; height: 100%; }

/* floating objects on the sheet */
.chart { position: absolute; top: 15px; background: #fff; font-family: Lato, "Open Sans", sans-serif; }
.chart1 { left: 317px; }
.chart2 { left: 893px; }
.frame { fill: none; stroke: #d9d9d9; }
.ctitle { font-size: 13px; text-anchor: middle; fill: #595959; }
.pie circle { fill: none; }
.call path { fill: #fff; stroke: #bfbfbf; }
.call text, .legend text { font-size: 8px; font-weight: bold; fill: #666; }
.call text { text-anchor: middle; }
.paste { position: absolute; left: 1757px; top: 385px; display: flex; align-items: center; gap: 4px; width: 76px; height: 29px; padding-left: 4px; background: #fff; border: 1px solid #ababab; color: #444; }

/* scroll bars */
.vscroll { display: flex; flex-direction: column; width: 26px; padding: 3px 4px 0 3px; }
.vscroll button { display: flex; align-items: center; justify-content: center; height: 19px; background: #fff; border: 1px solid #ababab; }
.vthumb { flex: 1; background: #fff; border: 1px solid #ababab; }
.vtrack { height: 17px; background: #d8d8d8; }

/* sheet tabs */
.sheetbar { display: flex; align-items: flex-start; height: 29px; padding-right: 26px; border-bottom: 1px solid #c6c6c6; }
.nav { display: flex; gap: 23px; width: 103px; padding: 8px 0 0 28px; }
.stab { position: relative; width: 139px; height: 26px; margin-top: -1px; padding-bottom: 4px; background: #fff; border: solid #ababab; border-width: 0 1px; border-bottom: 2px solid #217346; color: #217346; font-size: 15px; font-weight: bold; white-space: nowrap; }
.add { margin: 4px 0 0 33px; }
.push { margin: 6px 14px 0 auto; }
.hscroll { display: flex; width: calc(40% - 30px); height: 19px; margin-top: 5px; }
.hscroll button { display: flex; align-items: center; justify-content: center; width: 19px; background: #fff; border: 1px solid #ababab; }
.hthumb { flex: 1; background: #fff; border: 1px solid #ababab; }
.htrack { width: 21px; background: #d8d8d8; }

/* status bar */
.status { display: flex; align-items: center; height: 26px; padding: 0 19px 0 11px; background: #f1f3f3; font-size: 12px; }
.disp { display: flex; align-items: center; gap: 1px; margin: 0 25px 0 auto; }
.vw { display: flex; align-items: center; justify-content: center; width: 50px; height: 26px; }
.cur { background: #c6c6c6; }
.zoombar { display: flex; align-items: center; gap: 6px; margin: 0 16px 0 7px; }
.zoombar input { appearance: none; width: 126px; height: 14px; margin: 0; background: linear-gradient(#aaa, #aaa) center / 100% 1px no-repeat, linear-gradient(#aaa, #aaa) center / 1px 7px no-repeat; }
.zoombar input::-webkit-slider-thumb { appearance: none; width: 6px; height: 14px; background: #666; }
.taskbar { flex: 1; min-height: 9px; background: #1a0f05; }
.taskbar span { display: block; width: 62px; height: 9px; margin-left: 494px; background: #332a22; }
```
